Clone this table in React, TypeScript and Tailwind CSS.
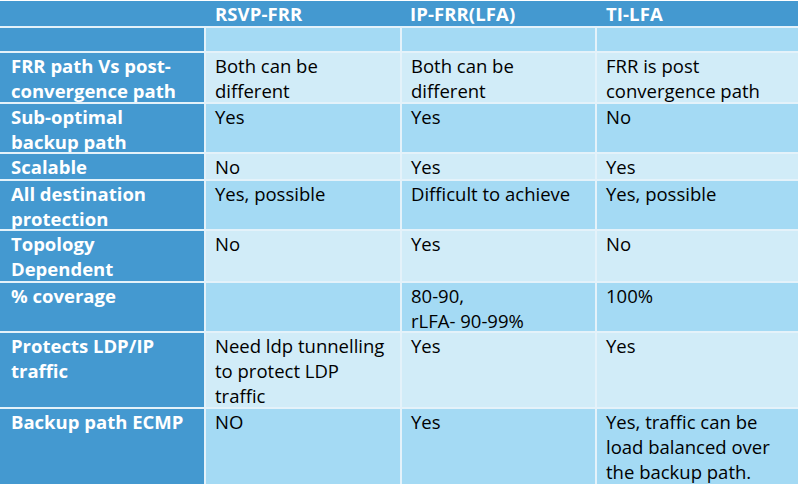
const rows: { label: string; cells: string[][]; h: string; dark: boolean }[] = [
  { label: '', cells: [[''], [''], ['']], h: 'h-[25px]', dark: true },
  { label: 'FRR path Vs post-\nconvergence path', cells: [['Both can be', 'different'], ['Both can be', 'different'], ['FRR is post', 'convergence path']], h: 'h-[51px]', dark: false },
  { label: 'Sub-optimal\nbackup path', cells: [['Yes'], ['Yes'], ['No']], h: 'h-[50px]', dark: true },
  { label: 'Scalable', cells: [['No'], ['Yes'], ['Yes']], h: 'h-[27px]', dark: false },
  { label: 'All destination\nprotection', cells: [['Yes, possible'], ['Difficult to achieve'], ['Yes, possible']], h: 'h-[50px]', dark: true },
  { label: 'Topology\nDependent', cells: [['No'], ['Yes'], ['No']], h: 'h-[52px]', dark: false },
  { label: '% coverage', cells: [[''], ['80-90,', 'rLFA- 90-99%'], ['100%']], h: 'h-[50px]', dark: true },
  { label: 'Protects LDP/IP\ntraffic', cells: [['Need ldp tunnelling', 'to protect LDP', 'traffic'], ['Yes'], ['Yes']], h: 'h-[76px]', dark: false },
  { label: 'Backup path ECMP', cells: [['NO'], ['Yes'], ['Yes, traffic can be', 'load balanced over', 'the backup path.']], h: 'h-[75px]', dark: true },
];

export default function App() {
  return (
    <div className="w-[800px] h-[485px] bg-white pt-px" style={{ fontFamily: '"Open Sans", sans-serif' }}>
      <div className="w-[798px] flex flex-col">
        <div className="grid grid-cols-[204px_196px_195px_203px] h-[25px] bg-[#4499d0] text-white font-bold text-[18.5px] leading-[25px] tracking-[0.1px]">
          <div />
          <div className="pl-[11px]">RSVP-FRR</div>
          <div className="pl-[10px]">IP-FRR(LFA)</div>
          <div className="pl-[11px]">TI-LFA</div>
        </div>
        {rows.map((r, i) => (
          <div key={i} className={`grid grid-cols-[204px_196px_195px_203px] border-t-2 border-[#e4f2fa] ${r.h}`}>
            <div className="bg-[#4499d0] text-white font-bold text-[18.5px] leading-[25px] pl-[11px] whitespace-pre-line">
              {r.label}
            </div>
            {r.cells.map((c, j) => (
              <div
                key={j}
                className={`border-l-2 border-[#e4f2fa] text-black text-[18.5px] leading-[25px] pl-[9px] ${r.dark ? 'bg-[#a4daf4]' : 'bg-[#d1ecf8]'}`}
              >
                {c.map((line, k) => (
                  <div key={k}>{line}</div>
                ))}
              </div>
            ))}
          </div>
        ))}
      </div>
    </div>
  );
}
